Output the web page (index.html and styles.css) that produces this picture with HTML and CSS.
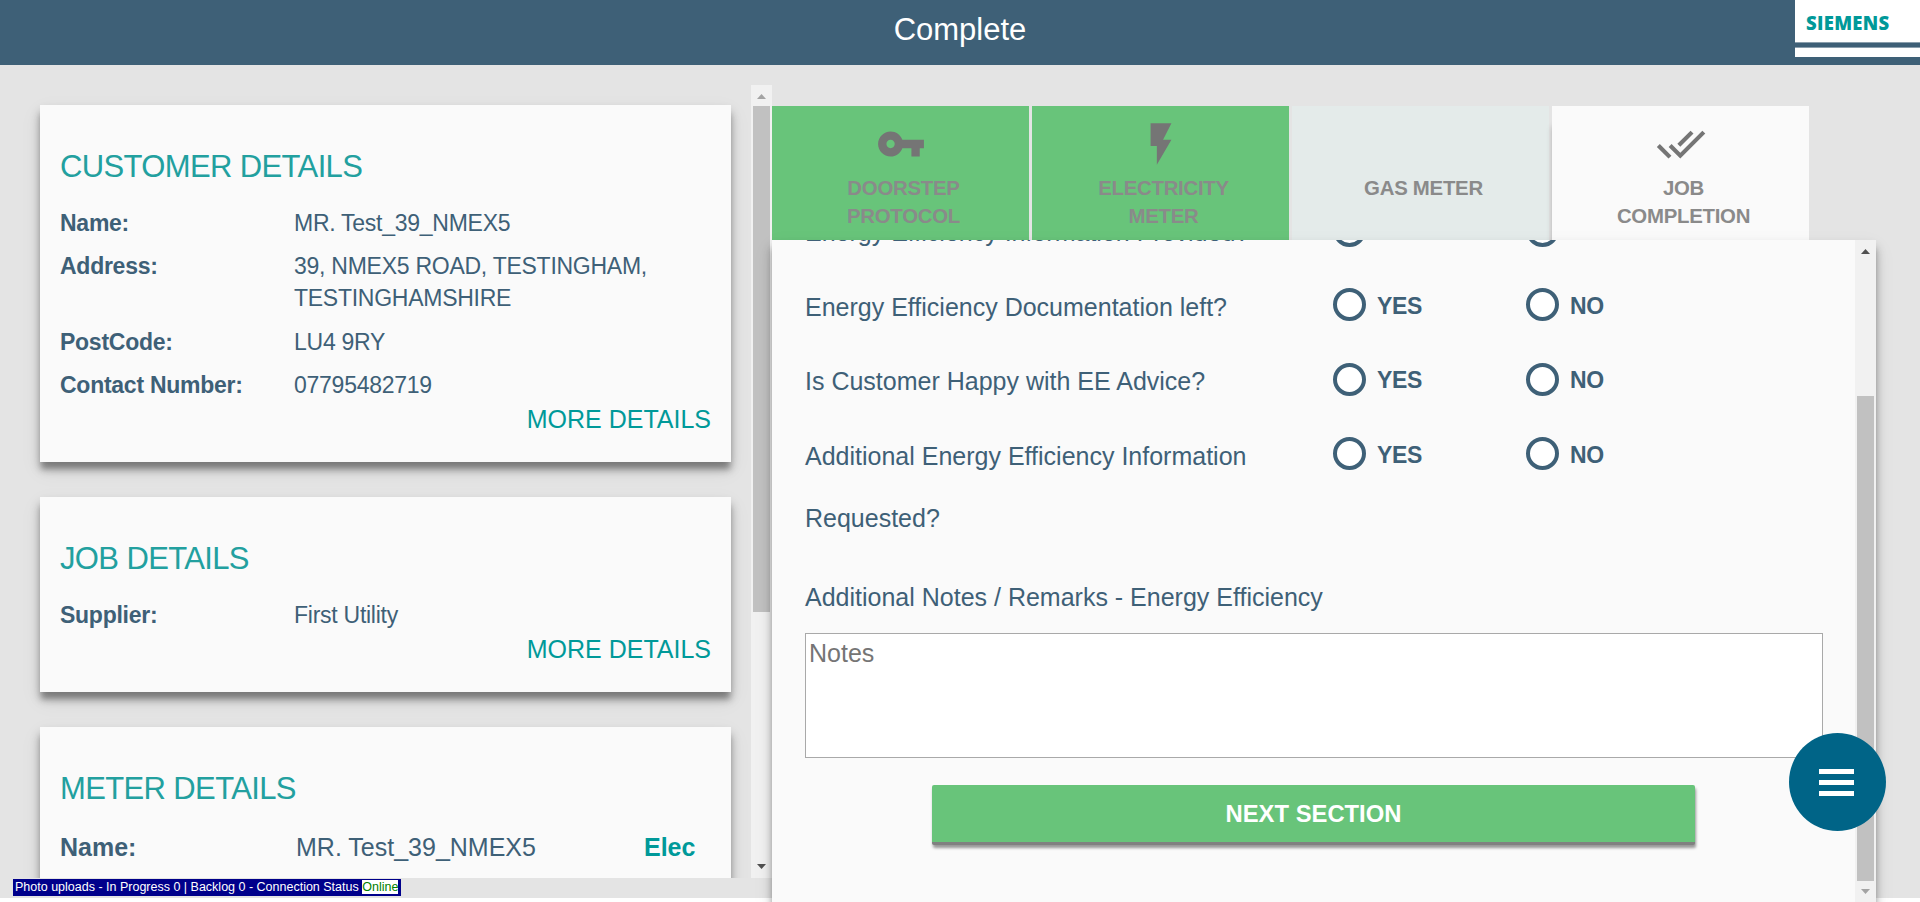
FILE: index.html
```
<!DOCTYPE html>
<html lang="en">
<head>
<meta charset="utf-8">
<title>Complete</title>
<link rel="stylesheet" href="styles.css">
</head>
<body>
<header class="header">
  <h1 class="title">Complete</h1>
  <div class="brand"><div class="brand-name">SIEMENS</div><div class="brand-strip"></div></div>
</header>
<main class="main">
  <div class="left">
    <div class="cards">
      <section class="card">
        <h2 class="card-title">CUSTOMER DETAILS</h2>
        <dl class="details">
          <dt>Name:</dt><dd>MR. Test_39_NMEX5</dd>
          <dt>Address:</dt><dd>39, NMEX5 ROAD, TESTINGHAM,<br>TESTINGHAMSHIRE</dd>
          <dt>PostCode:</dt><dd>LU4 9RY</dd>
          <dt>Contact Number:</dt><dd>07795482719</dd>
        </dl>
        <a class="more">MORE DETAILS</a>
      </section>
      <section class="card">
        <h2 class="card-title">JOB DETAILS</h2>
        <dl class="details"><dt>Supplier:</dt><dd>First Utility</dd></dl>
        <a class="more">MORE DETAILS</a>
      </section>
      <section class="card card-meter">
        <h2 class="card-title">METER DETAILS</h2>
        <div class="meter"><b class="meter-label">Name:</b><span class="meter-name">MR. Test_39_NMEX5</span><b class="meter-type">Elec</b></div>
      </section>
    </div>
    <div class="scrollbar">
      <svg class="arrow dim" viewBox="0 0 21 21"><path d="M6 14h9l-4.500-5z"/></svg>
      <div class="thumb thumb-left"></div>
      <svg class="arrow end" viewBox="0 0 21 21"><path d="M6 7h9l-4.500 5z"/></svg>
    </div>
  </div>
  <div class="right">
    <nav class="tabs">
      <div class="tab done"><svg class="tab-icon" viewBox="0 0 24 24"><path d="M12.650 10C11.830 7.670 9.610 6 7 6c-3.310 0-6 2.690-6 6s2.690 6 6 6c2.610 0 4.830-1.670 5.650-4H17v4h4v-4h2v-4H12.650zM7 14c-1.100 0-2-.9-2-2s.9-2 2-2 2 .9 2 2-.9 2-2 2z"/></svg><span class="tab-label">DOORSTEP<br>PROTOCOL</span></div>
      <div class="tab done"><svg class="tab-icon" viewBox="0 0 24 24"><path d="M7 2v11h3v9l7-12h-4l4-8z"/></svg><span class="tab-label">ELECTRICITY<br>METER</span></div>
      <div class="tab idle"><svg class="tab-icon" viewBox="0 0 24 24"></svg><span class="tab-label">GAS METER</span></div>
      <div class="tab active"><svg class="tab-icon" viewBox="0 0 24 24"><path d="M18 7l-1.410-1.410-6.340 6.340 1.410 1.410L18 7zm4.240-1.410L11.660 16.170 7.480 12l-1.410 1.410L11.660 19l12-12-1.420-1.410zM.41 13.410L6 19l1.410-1.410L1.830 12 .41 13.410z"/></svg><span class="tab-label">JOB<br>COMPLETION</span></div>
    </nav>
    <section class="panel">
      <form class="form">
        <div class="question first"><span class="ask">Energy Efficiency Information Provided?</span><span class="option yes"><i class="radio"></i>YES</span><span class="option"><i class="radio"></i>NO</span></div>
        <div class="question"><span class="ask">Energy Efficiency Documentation left?</span><span class="option yes"><i class="radio"></i>YES</span><span class="option"><i class="radio"></i>NO</span></div>
        <div class="question"><span class="ask">Is Customer Happy with EE Advice?</span><span class="option yes"><i class="radio"></i>YES</span><span class="option"><i class="radio"></i>NO</span></div>
        <div class="question tall"><span class="ask">Additional Energy Efficiency Information Requested?</span><span class="option yes"><i class="radio"></i>YES</span><span class="option"><i class="radio"></i>NO</span></div>
        <label class="notes-label" for="notes">Additional Notes / Remarks - Energy Efficiency</label>
        <textarea class="notes" id="notes" placeholder="Notes"></textarea>
        <button class="next" type="button">NEXT SECTION</button>
      </form>
      <div class="scrollbar">
        <svg class="arrow" viewBox="0 0 21 21"><path d="M6 14h9l-4.500-5z"/></svg>
        <div class="thumb thumb-right"></div>
        <svg class="arrow dim end" viewBox="0 0 21 21"><path d="M6 8h9l-4.500 5z"/></svg>
      </div>
    </section>
  </div>
</main>
<div class="status">Photo uploads - In Progress 0 | Backlog 0 - Connection Status <span class="online">Online</span></div>
<button class="fab" type="button" aria-label="Menu"><i></i><i></i><i></i></button>
</body>
</html>
```
FILE: styles.css
```
* { box-sizing: border-box; }
body {
  margin: 0;
  height: 902px;
  overflow: hidden;
  background: #fff;
  color: #3e6077;
  font-family: "Liberation Sans", Arial, sans-serif;
}
h1, h2, dl, dd { margin: 0; font-weight: 400; }

.header {
  height: 65px;
  background: #3e6077;
  display: grid;
  grid-template-columns: 125px 1fr 125px;
}
.title {
  grid-column: 2;
  color: #fff;
  font-size: 31px;
  line-height: 60px;
  text-align: center;
}
.brand { height: 57px; background: #fff; }
.brand-name {
  height: 42px;
  padding-left: 11px;
  font: 800 18.500px/46px "Open Sans", sans-serif;
  letter-spacing: .3px;
  color: #099;
}
.brand-strip { height: 6px; background: #3e6077; border: solid #8b9fad; border-width: 1px 0; }

.main { height: 833px; background: #e4e4e4; display: flex; }
.left { width: 772px; padding-top: 20px; display: flex; height: 813px; }
.cards {
  width: 751px;
  height: 793px;
  padding: 20px 20px 0 40px;
  overflow: hidden;
  display: flex;
  flex-direction: column;
  gap: 35px;
}
.card, .panel { box-shadow: 0 8px 6px -1px rgba(0,0,0,.3), 0 7px 10px rgba(0,0,0,.2), 0 8px 20px rgba(0,0,0,.08); }
.card {
  flex: none;
  background: #fafafa;
  padding: 42px 20px 24px;
}
.card-title { color: #22a09f; font-size: 31px; letter-spacing: -.63px; line-height: 39px; height: 60px; }
.details { display: grid; grid-template-columns: 234px 1fr; font-size: 23px; letter-spacing: -.26px; line-height: 32px; row-gap: 11.330px; }
.details dt { font-weight: 700; }
.more { display: block; text-align: right; color: #099; font-size: 25px; line-height: 37px; }
.card-meter { height: 220px; }
.meter { display: flex; font-size: 25px; line-height: 36px; }
.meter-label { width: 236px; }
.meter-name { width: 348px; }
.meter-type { color: #099; }

.scrollbar { width: 21px; flex: none; background: #f1f1f1; display: flex; flex-direction: column; }
.arrow { width: 21px; height: 21px; fill: #505050; flex: none; }
.arrow.dim { fill: #a3a3a3; }
.arrow.end { margin-top: auto; }
.thumb { background: #c1c1c1; margin: 0 2px; }
.thumb-left { height: 506px; }
.thumb-right { height: 486px; margin-top: 135px; }

.right { width: 1104px; padding-top: 41px; }
.tabs { display: flex; gap: 3px; height: 134px; }
.tab { width: 257px; padding: 13px 0 0 6px; display: flex; flex-direction: column; align-items: center; }
.done { background: #68c47a; }
.idle { background: #e4ebea; }
.active { background: #fafafa; box-shadow: 0 20px 6px -1px rgba(0,0,0,.3); clip-path: inset(0 0 0 -8px); }
.tab-icon { width: 50px; height: 50px; fill: #757575; margin-right: 6px; }
.tab-label { color: #8a8a8a; font-weight: 700; font-size: 20.400px; line-height: 28px; padding-top: 5px; text-align: center; letter-spacing: -.27px; }

.panel { position: relative; height: 662px; background: #fafafa; display: flex; }
.form { width: 1083px; height: 662px; overflow: hidden; padding: 0 33px; display: flex; flex-direction: column; }
.question { display: grid; grid-template-columns: 528px 193px 1fr; height: 74.600px; flex: none; font-size: 25px; line-height: 62px; }
.question.first { margin-top: -39px; }
.question.tall { height: 150px; }
.ask { width: 460px; }
.option { display: flex; align-items: center; height: 60px; gap: 11px; font-weight: 700; font-size: 23px; letter-spacing: -.3px; }
.radio { width: 33px; height: 33px; margin-bottom: 2px; border: 4px solid #3e6077; border-radius: 50%; background: #fff; }
.notes-label { font-size: 25px; line-height: 44px; }
.notes { width: 1018px; height: 125px; margin: 14px 0 27px; flex: none; border: 1px solid #a9a9a9; background: #fff; padding: 1px 3px; resize: none; font: 25px/36px "Liberation Sans", Arial, sans-serif; display: block; }
.notes::placeholder { color: #757575; }
.next { width: 763px; height: 60px; align-self: center; flex: none; border: 0; border-bottom: 3px solid #808080; border-radius: 2px; background: #68c47a; color: #fff; padding-top: 2px; font: 700 23.800px "Liberation Sans", Arial, sans-serif; box-shadow: 1px 3px 3px rgba(0,0,0,.4); }

.status { position: absolute; left: 13px; top: 879px; width: 388px; height: 17px; background: #00008b; color: #fff; font-size: 12.500px; line-height: 14px; padding: 1px 2px; white-space: nowrap; }
.online { background: #fff; color: green; }
.fab { position: absolute; left: 1789px; top: 733px; width: 97px; height: 98px; border: 0; border-radius: 50%; background: #006487; padding: 0; display: flex; flex-direction: column; align-items: center; justify-content: center; gap: 6px; }
.fab i { width: 35px; height: 5px; margin-right: 2px; background: #fff; }
```
